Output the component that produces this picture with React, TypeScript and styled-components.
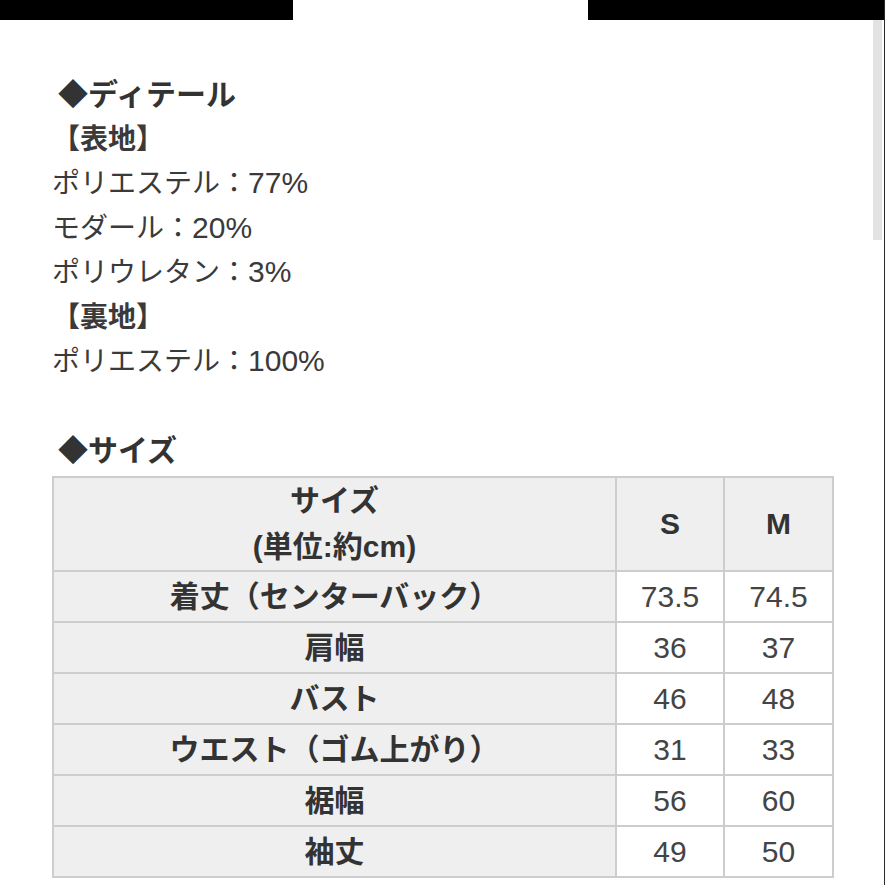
import React from "react";
import styled, { createGlobalStyle } from "styled-components";

const Global = createGlobalStyle`
  html, body { margin: 0; padding: 0; background: #fff; }
  body { font-family: "Liberation Sans", "Noto Sans CJK JP", sans-serif; }
`;

const Page = styled.div`
  position: relative;
  width: 885px;
  height: 885px;
  box-sizing: border-box;
  overflow: hidden;
  background: #fff;
  border-right: 1px solid #2a2a2a;
  color: #333;
  font-family: "Liberation Sans", "Noto Sans CJK JP", sans-serif;
`;

const TopBars = styled.div`
  display: flex;
  justify-content: space-between;
  height: 20px;
`;

const Bar = styled.div<{ $w: number }>`
  width: ${(p) => p.$w}px;
  height: 20px;
  background: #000;
`;

const Scrollbar = styled.div`
  position: absolute;
  right: 2px;
  top: 20px;
  width: 9px;
  height: 220px;
  background: #e3e3e3;
`;

const Content = styled.div`
  padding: 53px 0 0 52px;
`;

const Heading = styled.div`
  height: 44.5px;
  padding-left: 6px;
  font-size: 30px;
  font-weight: 700;
  line-height: 44.5px;
  color: #333;
`;

const Line = styled.div<{ $bold?: boolean }>`
  height: 44.5px;
  font-size: 28px;
  line-height: 44.5px;
  font-weight: ${(p) => (p.$bold ? 600 : 400)};
  color: #3a3a3a;
  white-space: nowrap;
`;

const Num = styled.span`
  font-size: 30px;
  line-height: 1;
`;

const Spacer = styled.div`
  height: 44.5px;
`;

const Table = styled.table`
  margin-top: 2px;
  width: 780px;
  border-collapse: collapse;
  table-layout: fixed;
  font-size: 30px;
`;

const Cell = styled.td<{ $head?: boolean; $label?: boolean }>`
  border: 2px solid #cdcdcd;
  text-align: center;
  vertical-align: middle;
  padding: 0;
  height: ${(p) => (p.$head ? 92 : 49)}px;
  line-height: ${(p) => (p.$head ? "46px" : "49px")};
  background: ${(p) => (p.$head || p.$label ? "#efefef" : "#fff")};
  font-weight: ${(p) => (p.$head || p.$label ? 700 : 400)};
  color: ${(p) => (p.$head || p.$label ? "#333" : "#444")};
  white-space: nowrap;
`;

const details: { text: string; value?: string; bold?: boolean }[] = [
  { text: "【表地】", bold: true },
  { text: "ポリエステル：", value: "77%" },
  { text: "モダール：", value: "20%" },
  { text: "ポリウレタン：", value: "3%" },
  { text: "【裏地】", bold: true },
  { text: "ポリエステル：", value: "100%" },
];

const rows: [string, string, string][] = [
  ["着丈（センターバック）", "73.5", "74.5"],
  ["肩幅", "36", "37"],
  ["バスト", "46", "48"],
  ["ウエスト（ゴム上がり）", "31", "33"],
  ["裾幅", "56", "60"],
  ["袖丈", "49", "50"],
];

export default function App() {
  return (
    <>
      <Global />
      <Page>
        <TopBars>
          <Bar $w={293} />
          <Bar $w={296} />
        </TopBars>
        <Scrollbar />
        <Content>
          <Heading>◆ディテール</Heading>
          {details.map((d, i) => (
            <Line key={i} $bold={d.bold}>
              {d.text}
              {d.value && <Num>{d.value}</Num>}
            </Line>
          ))}
          <Spacer />
          <Heading>◆サイズ</Heading>
          <Table>
            <colgroup>
              <col style={{ width: 563 }} />
              <col style={{ width: 108 }} />
              <col style={{ width: 109 }} />
            </colgroup>
            <thead>
              <tr>
                <Cell as="th" $head>
                  サイズ
                  <br />
                  (単位:約cm)
                </Cell>
                <Cell as="th" $head>S</Cell>
                <Cell as="th" $head>M</Cell>
              </tr>
            </thead>
            <tbody>
              {rows.map(([label, s, m]) => (
                <tr key={label}>
                  <Cell $label>{label}</Cell>
                  <Cell>{s}</Cell>
                  <Cell>{m}</Cell>
                </tr>
              ))}
            </tbody>
          </Table>
        </Content>
      </Page>
    </>
  );
}
